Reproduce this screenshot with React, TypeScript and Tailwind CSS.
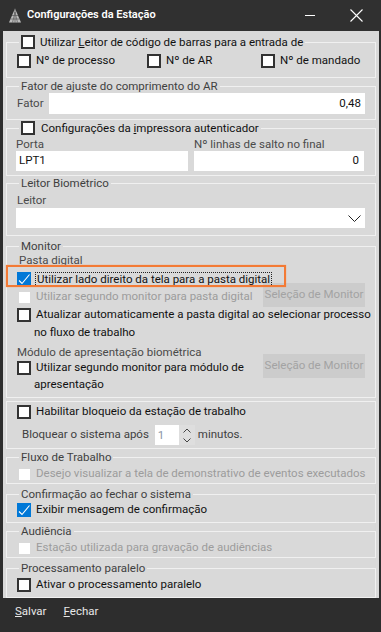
import React from 'react';

type BoxState = 'off' | 'on' | 'disabled';

function Check({ state = 'off' }: { state?: BoxState }) {
  if (state === 'on') {
    return (
      <span className="w-[14px] h-[14px] shrink-0 bg-[#0078d7] flex items-center justify-center">
        <svg width="14" height="14" viewBox="0 0 14 14">
          <path d="M2 8.5 L5 11.5 L12.5 2.5" fill="none" stroke="white" strokeWidth="1.1" />
        </svg>
      </span>
    );
  }
  if (state === 'disabled') {
    return (
      <span className="w-[14px] h-[14px] shrink-0 flex items-center justify-center">
        <span className="w-[11px] h-[11px] bg-white" />
      </span>
    );
  }
  return <span className="w-[14px] h-[14px] shrink-0 bg-white border-2 border-[#333333]" />;
}

function Group({
  legend,
  className = '',
  children,
}: {
  legend?: React.ReactNode;
  className?: string;
  children: React.ReactNode;
}) {
  return (
    <fieldset className={`border border-[#f0f0f0] min-w-0 ${className}`}>
      {legend && (
        <legend className="ml-[12px] px-[2px] h-[14px] leading-[14px] text-[#3f3f3f] flex items-center gap-[5px]">
          {legend}
        </legend>
      )}
      {children}
    </fieldset>
  );
}

function Option({ state = 'off', children, className = '' }: { state?: BoxState; children: React.ReactNode; className?: string }) {
  return (
    <div className={`flex items-center gap-[5px] h-[16px] ${className}`}>
      <Check state={state} />
      <span className={state === 'disabled' ? 'text-[#9c9c9c]' : 'text-[#111111]'}>{children}</span>
    </div>
  );
}

function MonitorButton() {
  return (
    <div className="ml-auto w-[102px] h-[24px] bg-[#cccccc] text-[#a3a3a3] flex items-center justify-center shrink-0">
      Seleção de Monitor
    </div>
  );
}

export default function App() {
  return (
    <div className="w-[381px] h-[632px] bg-[#2d2d2d] flex flex-col font-['Roboto',sans-serif] text-[11.5px] whitespace-nowrap overflow-hidden">
      {/* title bar */}
      <div className="h-[31px] flex items-center shrink-0 bg-[#303030]">
        <svg width="14" height="15" viewBox="0 0 14 15" className="ml-[8px]">
          <polygon points="7,0.5 13,14.5 1,14.5" fill="#bdbdbd" />
          <path d="M4 7.5 H10 M2.5 11 H11.5 M7 0.5 V14.5 M4.5 14.5 L7 4 M9.5 14.5 L7 4" stroke="#5a5a5a" strokeWidth="0.7" />
        </svg>
        <span className="ml-[5px] text-white font-semibold text-[11px]">Configurações da Estação</span>
        <div className="ml-auto w-[10px] h-[1px] bg-white mr-[35px]" />
        <svg width="13" height="13" viewBox="0 0 13 13" className="mr-[18px]">
          <path d="M0.5 0.5 L12.5 12.5 M12.5 0.5 L0.5 12.5" stroke="white" strokeWidth="1.1" />
        </svg>
      </div>

      {/* body */}
      <div className="ml-[3px] mr-[2px] bg-[#d9d9d9] px-[3px] pt-[4px] flex flex-col shrink-0">
        <Group
          legend={
            <>
              <Check />
              <span className="text-[#111111]">
                Utilizar <span className="underline">L</span>eitor de código de barras para a entrada de
              </span>
            </>
          }
        >
          <div className="flex pl-[10px] pt-[4px] pb-[8px]">
            <Option className="w-[130px]">Nº de processo</Option>
            <Option className="w-[114px]">Nº de AR</Option>
            <Option>Nº de mandado</Option>
          </div>
        </Group>

        <Group legend="Fator de ajuste do comprimento do AR" className="mt-[1px]">
          <div className="flex items-center px-[10px] pb-[5px]">
            <span className="w-[32px] text-[#4a4a4a]">Fator</span>
            <div className="flex-1 h-[21px] bg-white flex items-center justify-end pr-[4px] text-[#111111]">0,48</div>
          </div>
        </Group>

        <Group
          className="mt-[1px]"
          legend={
            <>
              <Check />
              <span className="ml-[1px] text-[#111111]">
                Configurações da <span className="underline">i</span>mpressora autenticador
              </span>
            </>
          }
        >
          <div className="grid grid-cols-[172px_170px] gap-x-[6px] pl-[9px] pt-[2px] pb-[4px]">
            <span className="leading-[14px] text-[#4a4a4a]">Porta</span>
            <span className="leading-[14px] text-[#4a4a4a]">Nº linhas de salto no final</span>
            <div className="h-[20px] bg-white flex items-center pl-[3px] text-[#111111]">LPT1</div>
            <div className="h-[20px] bg-white flex items-center justify-end pr-[5px] text-[#111111]">0</div>
          </div>
        </Group>

        <Group legend="Leitor Biométrico">
          <div className="flex flex-col pl-[9px] pr-[10px] pt-[3px] pb-[7px]">
            <span className="pl-[1px] leading-[14px] text-[#4a4a4a]">Leitor</span>
            <div className="mt-[1px] h-[20px] bg-white flex items-center justify-end pr-[4px]">
              <svg width="13" height="7" viewBox="0 0 13 7">
                <path d="M0.5 0.5 L6.5 6.5 L12.5 0.5" fill="none" stroke="#222222" strokeWidth="1" />
              </svg>
            </div>
          </div>
        </Group>

        <Group legend="Monitor" className="mt-[3px]">
          <div className="flex flex-col pl-[10px] pr-[10px] pb-[5px]">
            <span className="pl-[2px] leading-[14px] text-[#4a4a4a]">Pasta digital</span>
            <div className="relative mt-[4px] h-[16px] flex items-center gap-[4px]">
              <Check state="on" />
              <span className="h-[15px] leading-[13px] border border-dotted border-[#222222] px-[1px] text-[#111111]">
                Utilizar lado direito da tela para a pasta digital
              </span>
              <span className="absolute left-[-11px] top-[-6px] w-[280px] h-[22px] border-2 border-[#f37a35] shadow-[0_0_1px_#f59a60] pointer-events-none" />
            </div>
            <div className="flex h-[20px]">
              <Option state="disabled" className="h-[20px]">Utilizar segundo monitor para pasta digital</Option>
              <div className="ml-auto mt-[-4px]">
                <MonitorButton />
              </div>
            </div>
            <Option>Atualizar automaticamente a pasta digital ao selecionar processo</Option>
            <span className="mt-[1px] pl-[17px] leading-[16px] text-[#111111]">no fluxo de trabalho</span>
            <span className="mt-[4px] leading-[16px] text-[#4a4a4a]">Módulo de apresentação biométrica</span>
            <div className="flex">
              <div className="flex flex-col">
                <Option>Utilizar segundo monitor para módulo de</Option>
                <span className="pl-[17px] leading-[16px] text-[#111111]">apresentação</span>
              </div>
              <div className="ml-auto mt-[-6px]">
                <MonitorButton />
              </div>
            </div>
          </div>
        </Group>

        <Group className="mt-[3px]">
          <div className="flex flex-col pl-[10px] pr-[10px] pt-[2px] pb-[3px]">
            <Option>Habilitar bloqueio da estação de trabalho</Option>
            <div className="mt-[5px] h-[20px] flex items-center pl-[5px]">
              <span className="text-[#3f3f3f]">Bloquear o sistema após</span>
              <div className="ml-[6px] flex h-[20px]">
                <div className="w-[24px] bg-white pl-[3px] leading-[20px] text-[#8a94a6]">1</div>
                <div className="w-[16px] flex flex-col bg-[#dedede]">
                  <div className="h-[10px] flex items-center justify-center">
                    <svg width="8" height="5" viewBox="0 0 8 5">
                      <path d="M0.5 4.5 L4 1 L7.5 4.5" fill="none" stroke="#444444" strokeWidth="1" />
                    </svg>
                  </div>
                  <div className="h-[10px] flex items-center justify-center">
                    <svg width="8" height="5" viewBox="0 0 8 5">
                      <path d="M0.5 0.5 L4 4 L7.5 0.5" fill="none" stroke="#444444" strokeWidth="1" />
                    </svg>
                  </div>
                </div>
              </div>
              <span className="ml-[3px] text-[#3f3f3f]">minutos.</span>
            </div>
          </div>
        </Group>

        <Group legend="Fluxo de Trabalho" className="mt-[1px]">
          <div className="pl-[10px] mt-[2px] pb-[1px]">
            <Option state="disabled">Desejo visualizar a tela de demonstrativo de eventos executados</Option>
          </div>
        </Group>

        <Group legend="Confirmação ao fechar o sistema" className="mt-[3px]">
          <div className="pl-[10px] mt-[1px] pb-[4px]">
            <Option state="on">Exibir mensagem de confirmação</Option>
          </div>
        </Group>

        <Group legend="Audiência" className="mt-[1px]">
          <div className="pl-[10px] mt-[2px] pb-[1px]">
            <Option state="disabled">Estação utilizada para gravação de audiências</Option>
          </div>
        </Group>

        <Group legend="Processamento paralelo" className="mt-[3px]">
          <div className="pl-[10px] mt-[2px] pb-[4px]">
            <Option>Ativar o processamento paralelo</Option>
          </div>
        </Group>
      </div>

      {/* footer */}
      <div className="h-[28px] flex items-center gap-[17px] pl-[15px] text-[#e8e8e8] shrink-0">
        <span>
          <span className="underline">S</span>alvar
        </span>
        <span>
          <span className="underline">F</span>echar
        </span>
      </div>
    </div>
  );
}
